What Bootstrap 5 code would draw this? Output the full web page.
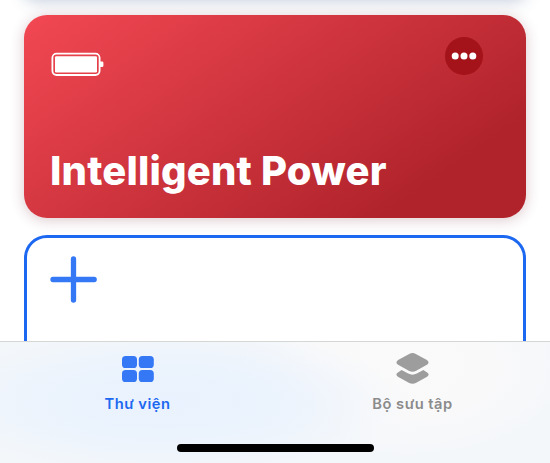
<!DOCTYPE html>
<html lang="vi">
<head>
<meta charset="utf-8">
<meta name="viewport" content="width=device-width, initial-scale=1">
<title>Intelligent Power</title>
<link rel="stylesheet" href="https://cdn.jsdelivr.net/npm/bootstrap@5.3.0/dist/css/bootstrap.min.css">
<style>
  body { font-family: Inter, "Liberation Sans", sans-serif; background: #fff; }
  .screen { width: 550px; height: 463px; }
  /* only the shadow of the tile scrolled off the top is visible */
  .library { height: 341px; padding: 0 24px; }
  .previous-tile { height: 23px; margin-top: -25px; border-radius: 23px; box-shadow: 0 3px 16px rgba(52, 84, 134, .3); }
  .shortcut { height: 203.5px; margin-top: 16.5px; padding: 22px 43.5px 27px 26px; border-radius: 23px; color: #fff;
    background: linear-gradient(145deg, #f24853 0%, #b0232b 82%, #b0232b 100%);
    box-shadow: 0 2px 14px rgba(105, 25, 40, .24); }
  .battery { margin-top: 14.5px; }
  .more { width: 38px; height: 38px; background: #a41319; }
  .shortcut-name { font-size: 40px; line-height: 40px; font-weight: 800; letter-spacing: .18px; }
  .new-shortcut { height: 130px; margin-top: 16.5px; padding: 18.5px 23px; border: 3px solid #1d68f0; border-radius: 23px; background: #fff; }
  .tabs { height: 122px; border-top: 1px solid #d5d7d5;
    background: radial-gradient(ellipse 240px 75px at 165px 60px, #e9f2fe 0%, #ebf3fd 45%, rgba(235, 243, 253, 0) 100%),
      radial-gradient(ellipse 165px 90px at 405px 25px, #fafafa 0%, #f9f9fa 55%, rgba(249, 249, 250, 0) 100%), #f4f7fa; }
  .tab { width: 275px; padding-top: 9px; font-size: 14.7px; line-height: 18px; font-weight: 600; letter-spacing: .5px; text-decoration: none; }
  .tab svg { margin-bottom: 9.5px; }
  .tab-active { color: #1d68f0; }
  .tab-idle { color: #8b8b8b; }
  .home-bar { width: 197px; height: 8px; margin-bottom: 11px; background: #000; }
</style>
<script src="https://cdn.jsdelivr.net/npm/bootstrap@5.3.0/dist/js/bootstrap.bundle.min.js"></script>
</head>
<body class="overflow-hidden">
<div class="screen d-flex flex-column overflow-hidden">
  <main class="library d-flex flex-column overflow-hidden flex-shrink-0">
    <div class="previous-tile flex-shrink-0"></div>
    <section class="shortcut d-flex flex-column justify-content-between flex-shrink-0">
      <div class="d-flex justify-content-between align-items-start">
        <svg class="battery" width="54" height="26" viewBox="0 0 54 26" aria-hidden="true">
          <rect x="2.4" y="2.6" width="47.2" height="21.4" rx="4.2" fill="none" stroke="#fff" stroke-width="1.8"/>
          <rect x="5" y="5.2" width="42" height="16.2" rx="1.2" fill="#fff"/>
          <path d="M50 10.4h2q1.4 0 1.4 1.3v3q0 1.3-1.4 1.3h-2z" fill="#fff"/>
        </svg>
        <div class="more rounded-circle d-flex align-items-center justify-content-center">
          <svg width="26" height="8" viewBox="0 0 26 8" aria-hidden="true" fill="#fff"><circle cx="4.2" cy="4" r="3.5"/><circle cx="13" cy="4" r="3.5"/><circle cx="21.8" cy="4" r="3.5"/></svg>
        </div>
      </div>
      <h1 class="shortcut-name m-0 text-nowrap">Intelligent Power</h1>
    </section>
    <section class="new-shortcut flex-shrink-0">
      <svg class="d-block" width="47" height="47" viewBox="0 0 47 47" aria-hidden="true"><path d="M23.5 3v41M3 23.5h41.2" stroke="#3478f6" stroke-width="5.3" stroke-linecap="round"/></svg>
    </section>
  </main>
  <nav class="tabs d-flex flex-column justify-content-between flex-shrink-0">
    <div class="d-flex">
      <a href="#" class="tab tab-active d-flex flex-column align-items-center">
        <svg width="34" height="34" viewBox="0 0 34 34" fill="#3478f6" aria-hidden="true">
          <rect x="1" y="5" width="15" height="12" rx="3.6"/><rect x="17.8" y="5" width="15" height="12" rx="3.6"/>
          <rect x="1" y="19" width="15" height="12" rx="3.6"/><rect x="17.8" y="19" width="15" height="12" rx="3.6"/>
        </svg>
        <span>Thư viện</span>
      </a>
      <a href="#" class="tab tab-idle d-flex flex-column align-items-center">
        <svg width="34" height="34" viewBox="0 0 34 34" fill="#9d9d9d" aria-hidden="true">
          <path d="M13.2 3Q16.5 1 19.8 3L30.9 9Q34.2 11.4 30.9 13.7L20.2 19.7Q16.5 21.8 12.8 19.7L2.1 13.7Q-1.2 11.4 2.1 9Z"/>
          <path d="M5.6 19.1L12.2 22.6Q16.5 24.8 20.8 22.6L27.4 19.1L31.1 21.4Q34.2 23.6 31.1 25.8L20.2 31.7Q16.5 33.9 12.8 31.7L1.9 25.8Q-1.2 23.6 1.9 21.4Z"/>
        </svg>
        <span>Bộ sưu tập</span>
      </a>
    </div>
    <div class="home-bar rounded-pill mx-auto"></div>
  </nav>
</div>
</body>
</html>
